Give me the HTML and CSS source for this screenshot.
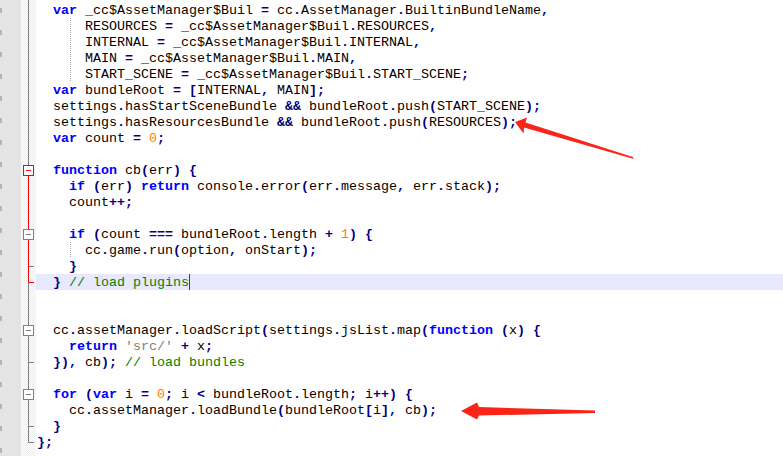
FILE: index.html
```html
<!DOCTYPE html>
<html lang="en">
<head>
    <meta charset="UTF-8">
    <title>main.js - Notepad++</title>
    <link rel="stylesheet" href="styles.css">
</head>
<body>
    <div class="editor">
        <!-- line numbers are scrolled off to the left, only their edges show -->
        <div class="gutter">
            <div class="ln"></div><div class="ln"></div><div class="ln"></div><div class="ln"></div>
            <div class="ln"></div><div class="ln"></div><div class="ln"></div><div class="ln"></div>
            <div class="ln"></div><div class="ln"></div><div class="ln"></div><div class="ln"></div>
            <div class="ln"></div><div class="ln"></div><div class="ln"></div><div class="ln"></div>
            <div class="ln"></div><div class="ln"></div><div class="ln"></div><div class="ln"></div>
            <div class="ln"></div><div class="ln"></div><div class="ln"></div><div class="ln"></div>
            <div class="ln"></div><div class="ln"></div><div class="ln"></div><div class="ln"></div>
        </div>

        <!-- fold margin -->
        <div class="fold">
            <svg width="15" height="456" viewBox="0 0 15 456">
                <g stroke="#808080" stroke-width="1" fill="none">
                    <line x1="7.5" y1="0" x2="7.5" y2="442.5"/>
                    <line x1="8" y1="266.5" x2="13" y2="266.5"/>
                    <line x1="8" y1="362.5" x2="13" y2="362.5"/>
                    <line x1="8" y1="426.5" x2="13" y2="426.5"/>
                    <line x1="7.5" y1="442.5" x2="13" y2="442.5"/>
                </g>
                <g stroke="#ff0000" stroke-width="1">
                    <line x1="7.5" y1="175" x2="7.5" y2="282.5"/>
                    <line x1="7.5" y1="282.5" x2="13" y2="282.5"/>
                </g>
                <g class="box" stroke="#ff0000">
                    <rect x="2.5" y="165.5" width="10" height="10"/>
                    <line x1="5" y1="170.5" x2="10" y2="170.5"/>
                </g>
                <g class="box" stroke="#808080">
                    <rect x="2.5" y="229.5" width="10" height="10"/>
                    <line x1="5" y1="234.5" x2="10" y2="234.5"/>
                    <rect x="2.5" y="325.5" width="10" height="10"/>
                    <line x1="5" y1="330.5" x2="10" y2="330.5"/>
                    <rect x="2.5" y="389.5" width="10" height="10"/>
                    <line x1="5" y1="394.5" x2="10" y2="394.5"/>
                </g>
            </svg>
        </div>

        <div class="code">
<div class="line">  <span class="k">var</span> _cc$AssetManager$Buil <span class="o">=</span> cc<span class="o">.</span>AssetManager<span class="o">.</span>BuiltinBundleName<span class="o">,</span></div>
<div class="line guide">      RESOURCES <span class="o">=</span> _cc$AssetManager$Buil<span class="o">.</span>RESOURCES<span class="o">,</span></div>
<div class="line guide">      INTERNAL <span class="o">=</span> _cc$AssetManager$Buil<span class="o">.</span>INTERNAL<span class="o">,</span></div>
<div class="line guide">      MAIN <span class="o">=</span> _cc$AssetManager$Buil<span class="o">.</span>MAIN<span class="o">,</span></div>
<div class="line guide">      START_SCENE <span class="o">=</span> _cc$AssetManager$Buil<span class="o">.</span>START_SCENE<span class="o">;</span></div>
<div class="line">  <span class="k">var</span> bundleRoot <span class="o">=</span> <span class="o">[</span>INTERNAL<span class="o">,</span> MAIN<span class="o">];</span></div>
<div class="line">  settings<span class="o">.</span>hasStartSceneBundle <span class="o">&amp;&amp;</span> bundleRoot<span class="o">.</span>push<span class="o">(</span>START_SCENE<span class="o">);</span></div>
<div class="line">  settings<span class="o">.</span>hasResourcesBundle <span class="o">&amp;&amp;</span> bundleRoot<span class="o">.</span>push<span class="o">(</span>RESOURCES<span class="o">);</span></div>
<div class="line">  <span class="k">var</span> count <span class="o">=</span> <span class="n">0</span><span class="o">;</span></div>
<div class="line"></div>
<div class="line">  <span class="k">function</span> cb<span class="o">(</span>err<span class="o">)</span> <span class="o">{</span></div>
<div class="line">    <span class="k">if</span> <span class="o">(</span>err<span class="o">)</span> <span class="k">return</span> console<span class="o">.</span>error<span class="o">(</span>err<span class="o">.</span>message<span class="o">,</span> err<span class="o">.</span>stack<span class="o">);</span></div>
<div class="line">    count<span class="o">++;</span></div>
<div class="line"></div>
<div class="line">    <span class="k">if</span> <span class="o">(</span>count <span class="o">===</span> bundleRoot<span class="o">.</span>length <span class="o">+</span> <span class="n">1</span><span class="o">)</span> <span class="o">{</span></div>
<div class="line guide">      cc<span class="o">.</span>game<span class="o">.</span>run<span class="o">(</span>option<span class="o">,</span> onStart<span class="o">);</span></div>
<div class="line">    <span class="o">}</span></div>
<div class="line current">  <span class="o">}</span> <span class="c">// load plugins</span><span class="caret"></span></div>
<div class="line"></div>
<div class="line"></div>
<div class="line">  cc<span class="o">.</span>assetManager<span class="o">.</span>loadScript<span class="o">(</span>settings<span class="o">.</span>jsList<span class="o">.</span>map<span class="o">(</span><span class="k">function</span> <span class="o">(</span>x<span class="o">)</span> <span class="o">{</span></div>
<div class="line">    <span class="k">return</span> <span class="s">'src/'</span> <span class="o">+</span> x<span class="o">;</span></div>
<div class="line">  <span class="o">}),</span> cb<span class="o">);</span> <span class="c">// load bundles</span></div>
<div class="line"></div>
<div class="line">  <span class="k">for</span> <span class="o">(</span><span class="k">var</span> i <span class="o">=</span> <span class="n">0</span><span class="o">;</span> i <span class="o">&lt;</span> bundleRoot<span class="o">.</span>length<span class="o">;</span> i<span class="o">++)</span> <span class="o">{</span></div>
<div class="line">    cc<span class="o">.</span>assetManager<span class="o">.</span>loadBundle<span class="o">(</span>bundleRoot<span class="o">[</span>i<span class="o">],</span> cb<span class="o">);</span></div>
<div class="line">  <span class="o">}</span></div>
<div class="line"><span class="o">};</span></div>
        </div>

        <!-- red markers drawn over the code -->
        <svg class="arrows" width="783" height="456" viewBox="0 0 783 456">
            <polygon points="515,122 527,117.5 525.5,122.5 633.5,157.2 633,158.8 524,127.5 523.5,133.5"/>
            <polygon points="461,411 477,402.5 479,407 595,410.5 595,413 479,415.5 477,419.5"/>
        </svg>
    </div>
</body>
</html>
```

FILE: styles.css
```css
* {
    margin: 0;
    padding: 0;
    box-sizing: border-box;
}

body {
    background: #fff;
}

.editor {
    position: relative;
    display: flex;
    width: 783px;
    height: 456px;
    overflow: hidden;
    font-family: "Liberation Mono", "Courier New", monospace;
    font-size: 13.333px;
    line-height: 16px;
    color: #000;
}

.gutter {
    width: 21px;
    flex: none;
    background: #e4e4e4;
    padding-top: 2px;
}

.ln {
    height: 16px;
}

/* right edge of the last digit, the rest is scrolled away */
.ln::before {
    content: "";
    display: block;
    width: 2px;
    height: 5px;
    margin-top: 6px;
    background: #a9b6c8;
}

.fold {
    width: 15px;
    flex: none;
    background: repeating-conic-gradient(#ececec 0 25%, #fff 0 50%) 0 0 / 2px 2px;
}

.fold svg {
    display: block;
}

.fold .box rect {
    fill: #fff;
}

.code {
    flex: 1;
    padding-top: 2px;
}

.line {
    height: 16px;
    padding-left: 1px;
    padding-top: 1px;
    white-space: pre;
}

.line.guide {
    background: linear-gradient(#a8a8a8 50%, transparent 50%) 34px 0 / 1px 2px repeat-y;
}

.line.current {
    background: #e8e8ff;
}

.k {
    color: #0000ff;
    font-weight: bold;
}

.o {
    color: #000080;
    font-weight: bold;
}

.n {
    color: #ff8000;
}

.s {
    color: #808080;
}

.c {
    color: #008000;
}

.caret {
    display: inline-block;
    width: 1px;
    height: 16px;
    margin-top: -1px;
    margin-right: -1px;
    vertical-align: top;
    background: #5a1ea0;
}

.arrows {
    position: absolute;
    left: 0;
    top: 0;
    pointer-events: none;
}

.arrows polygon {
    fill: #fa2418;
}
```
